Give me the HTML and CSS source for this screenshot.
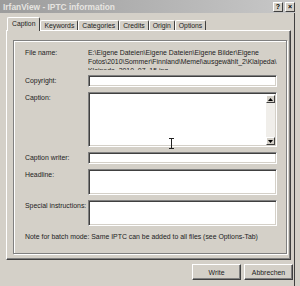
FILE: index.html
```html
<!DOCTYPE html>
<html lang="en">
<head>
  <meta charset="UTF-8">
  <title>IrfanView - IPTC information</title>
  <link rel="stylesheet" href="styles.css">
</head>
<body>
  <div class="window">
    <!-- Title bar -->
    <div class="titlebar">
      <span class="title">IrfanView - IPTC information</span>
      <div class="caption-btns">
        <span class="cbtn">?</span>
        <span class="cbtn">&#215;</span>
      </div>
    </div>

    <!-- Tabs -->
    <div class="tabs">
      <div class="tab active">Caption</div>
      <div class="tab">Keywords</div>
      <div class="tab">Categories</div>
      <div class="tab">Credits</div>
      <div class="tab">Origin</div>
      <div class="tab">Options</div>
    </div>

    <!-- Tab page -->
    <div class="panel">
      <div class="group">
        <div class="fields">
          <span class="label">File name:</span>
          <div class="filename">E:\Eigene Dateien\Eigene Dateien\Eigene Bilder\Eigene Fotos\2010\Sommer\Finnland\Memel\ausgewählt_2\Klaipeda\Klaipeda_2010_07_15.jpg</div>

          <span class="label">Copyright:</span>
          <div class="field single"></div>

          <span class="label">Caption:</span>
          <div class="field caption-box">
            <div class="scrollbar">
              <span class="sbtn"><svg width="5" height="3" viewBox="0 0 5 3"><path d="M2.5 0 L5 3 L0 3 Z" fill="#000"/></svg></span>
              <span class="sbtn"><svg width="5" height="3" viewBox="0 0 5 3"><path d="M0 0 L5 0 L2.5 3 Z" fill="#000"/></svg></span>
            </div>
            <svg class="ibeam" width="5" height="11" viewBox="0 0 5 11">
              <path d="M0 0.5 H5 M2.5 0.5 V10.5 M0 10.5 H5" stroke="#222" stroke-width="1" fill="none"/>
            </svg>
          </div>

          <span class="label">Caption writer:</span>
          <div class="field single"></div>

          <span class="label">Headline:</span>
          <div class="field double"></div>

          <span class="label">Special instructions:</span>
          <div class="field double"></div>
        </div>

        <p class="note">Note for batch mode: Same IPTC can be added to all files (see Options-Tab)</p>
      </div>
    </div>

    <!-- Dialog buttons -->
    <div class="buttons">
      <button class="btn">Write</button>
      <button class="btn">Abbrechen</button>
    </div>
  </div>
</body>
</html>
```

FILE: styles.css
```css
/* Page */
body {
  margin: 0;
  background: #d4d0c8;
  font-family: "Liberation Sans", Arial, sans-serif;
  font-size: 6.9px;
  color: #222;
  overflow: hidden;
}

/* Dialog window */
.window {
  width: 295px;
  height: 286px;
  box-sizing: border-box;
  border-right: 1px solid #404040;
  position: relative;
}

/* Title bar (inactive) */
.titlebar {
  height: 13px;
  display: flex;
  align-items: center;
  justify-content: space-between;
  padding: 0 0 0 3px;
  margin-right: -1px;
  background: linear-gradient(to right, #9c9c9c, #c8c8c8);
}

.title {
  font-weight: bold;
  font-size: 8.4px;
  color: #e6e4e0;
}

.caption-btns {
  display: flex;
  gap: 2px;
}

.cbtn {
  width: 8px;
  height: 8px;
  background: #d4d0c8;
  border: 1px solid;
  border-color: #fff #404040 #404040 #fff;
  font-size: 7px;
  font-weight: bold;
  line-height: 8px;
  text-align: center;
  color: #000;
}

/* Tabs */
.tabs {
  display: flex;
  align-items: flex-end;
  height: 17px;
  padding-left: 7px;
}

.tab {
  height: 9px;
  padding: 0 3px;
  border: 1px solid;
  border-color: #fff #404040 transparent #fff;
  border-bottom: none;
  border-radius: 2px 2px 0 0;
  line-height: 9px;
  font-size: 6.8px;
}

.tab.active {
  height: 13px;
  line-height: 11px;
  padding: 0 4px;
  margin-bottom: -1px;
  position: relative;
  z-index: 1;
  background: #d4d0c8;
}

/* Tab page */
.panel {
  margin-left: 6px;
  width: 285px;
  height: 230px;
  box-sizing: border-box;
  border: 1px solid;
  border-color: #fff #404040 #404040 #fff;
  box-shadow: inset -1px -1px 0 #808080;
  padding: 9px 3px 5px 6px;
}

/* Etched group box */
.group {
  height: 100%;
  box-sizing: border-box;
  border: 1px solid #808080;
  box-shadow: 1px 1px 0 #fff, inset 1px 1px 0 #fff;
  padding: 6px 9px 0 11px;
}

.fields {
  display: grid;
  grid-template-columns: 63px 1fr;
  row-gap: 5px;
}

.label {
  padding-top: 2px;
  line-height: 8px;
  white-space: nowrap;
}

.filename {
  height: 23px;
  line-height: 9px;
  padding-top: 1px;
  box-sizing: border-box;
  overflow: hidden;
  overflow-wrap: anywhere;
}

/* Sunken edit fields */
.field {
  background: #fff;
  box-sizing: border-box;
  border: 1px solid;
  border-color: #808080 #fff #fff #808080;
  box-shadow: inset 1px 1px 0 #404040, inset -1px -1px 0 #d4d0c8;
}

.field.single {
  height: 12px;
}

.field.double {
  height: 26px;
}

.caption-box {
  height: 55px;
  display: flex;
  justify-content: flex-end;
  padding: 2px 1px 1px 2px;
  position: relative;
}

.scrollbar {
  width: 9px;
  display: flex;
  flex-direction: column;
  justify-content: space-between;
  background: #f0eeea;
}

.sbtn {
  height: 8px;
  box-sizing: border-box;
  display: flex;
  align-items: center;
  justify-content: center;
  background: #d4d0c8;
  border: 1px solid;
  border-color: #fff #404040 #404040 #fff;
}

/* Mouse cursor over the caption */
.ibeam {
  position: absolute;
  left: 80px;
  top: 45px;
}

.note {
  margin: 7px 0 0;
  line-height: 8px;
  white-space: nowrap;
}

/* Bottom buttons */
.buttons {
  display: flex;
  justify-content: flex-end;
  gap: 3px;
  padding: 4px 1px 0 0;
}

.btn {
  width: 49px;
  height: 16px;
  padding: 0;
  background: #d4d0c8;
  border: 1px solid;
  border-color: #fff #404040 #404040 #fff;
  box-shadow: inset -1px -1px 0 #808080;
  font-family: "Liberation Sans", Arial, sans-serif;
  font-size: 6.9px;
  color: #222;
}
```
